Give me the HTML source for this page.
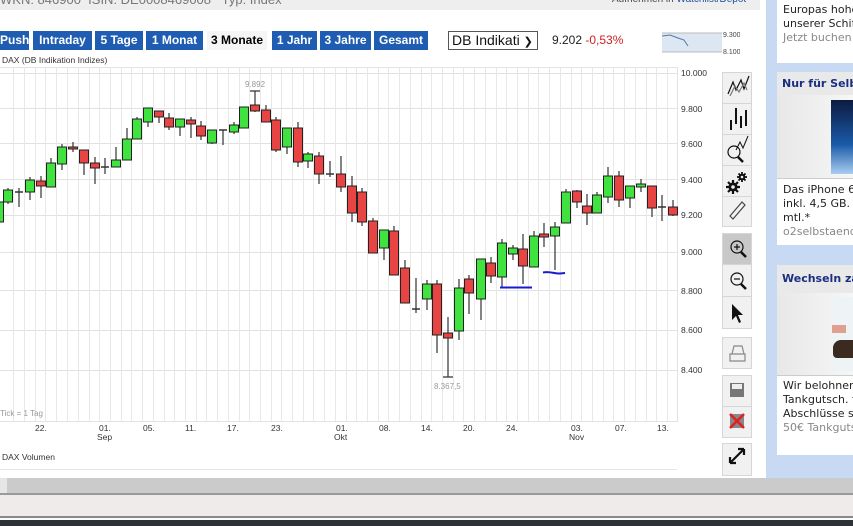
<!DOCTYPE html>
<html><head><meta charset="utf-8"><style>
*{margin:0;padding:0;box-sizing:border-box}
body{width:853px;height:526px;overflow:hidden;background:#fff;font-family:"Liberation Sans",Arial,sans-serif;position:relative}
.a{position:absolute}
.btn{position:absolute;top:31px;height:19px;background:#1f5db3;color:#fff;font-weight:bold;font-size:12px;line-height:19px;text-align:center}
.tb{position:absolute;left:722px;width:30px;background:#f1f1f1;border:1px solid #d6d6d6}
.side{font-family:"DejaVu Sans",sans-serif;font-size:11px;color:#222;line-height:14px}
</style></head><body>
<div class="a" style="left:0;top:0;width:760px;height:10px;background:#eeeeee"></div>
<div class="a" style="left:0;top:-8px;font-size:13px;color:#777;white-space:nowrap">WKN: 846900 &nbsp;ISIN: DE0008469008 &nbsp; Typ: Index</div>
<div class="a" style="left:612px;top:-6px;font-size:10px;color:#444;white-space:nowrap">Aufnehmen in <span style="color:#1f4f9f">Watchlist/Depot</span></div>

<div class="btn" style="left:0;width:29px">Push</div>
<div class="btn" style="left:33px;width:59px">Intraday</div>
<div class="btn" style="left:95px;width:48px">5 Tage</div>
<div class="btn" style="left:146px;width:57px">1 Monat</div>
<div class="btn" style="left:207px;width:60px;background:#f5f5f5;color:#000">3 Monate</div>
<div class="btn" style="left:272px;width:45px">1 Jahr</div>
<div class="btn" style="left:320px;width:51px">3 Jahre</div>
<div class="btn" style="left:374px;width:54px">Gesamt</div>
<div class="a" style="left:2px;top:55px;font-size:8.5px;color:#333">DAX (DB Indikation Indizes)</div>

<div class="a" style="left:448px;top:31px;width:90px;height:19px;border:1px solid #555;font-size:14px;line-height:17px;padding-left:3px;color:#111">DB Indikati <span style="font-size:11px">&#10095;</span></div>
<div class="a" style="left:552px;top:33px;font-size:12px;color:#222">9.202 <span style="color:#d02020">-0,53%</span></div>
<svg class="a" style="left:660px;top:30px" width="80" height="26">
<rect x="2" y="3" width="60" height="19" fill="#dde6f3"/>
<line x1="2" y1="3" x2="62" y2="3" stroke="#bbb"/><line x1="2" y1="22" x2="62" y2="22" stroke="#bbb"/>
<polyline points="2,6 10,5 18,8 24,10 28,16" fill="none" stroke="#5577aa"/>
<text x="63" y="7" font-size="7" fill="#444">9.300</text><text x="63" y="24" font-size="7" fill="#444">8.100</text>
</svg>

<svg class="a" style="left:0;top:60px" width="720" height="420">
<g transform="translate(0,-60)">
<g stroke="#e2e2e2" stroke-width="1">
<line x1="0" y1="67.5" x2="677" y2="67.5"/>
<line x1="0" y1="73.5" x2="677" y2="73.5"/><line x1="0" y1="108.5" x2="677" y2="108.5"/><line x1="0" y1="143.5" x2="677" y2="143.5"/><line x1="0" y1="179.5" x2="677" y2="179.5"/><line x1="0" y1="215.5" x2="677" y2="215.5"/><line x1="0" y1="252.5" x2="677" y2="252.5"/><line x1="0" y1="290.5" x2="677" y2="290.5"/><line x1="0" y1="330.5" x2="677" y2="330.5"/><line x1="0" y1="370.5" x2="677" y2="370.5"/>
<line x1="0" y1="421.5" x2="677" y2="421.5"/>
<line x1="677.5" y1="67" x2="677.5" y2="422"/>
</g>
<g stroke="#e8e8e8">
<path d="M13.5 67V421M24.5 67V421M35.5 67V421M45.5 67V421M56.5 67V421M67.5 67V421M78.5 67V421M89.5 67V421M99.5 67V421M110.5 67V421M121.5 67V421M131.5 67V421M142.5 67V421M153.5 67V421M164.5 67V421M174.5 67V421M185.5 67V421M196.5 67V421M206.5 67V421M217.5 67V421M228.5 67V421M239.5 67V421M249.5 67V421M260.5 67V421M271.5 67V421M281.5 67V421M292.5 67V421M303.5 67V421M313.5 67V421M324.5 67V421M335.5 67V421M346.5 67V421M356.5 67V421M367.5 67V421M378.5 67V421M388.5 67V421M399.5 67V421M410.5 67V421M421.5 67V421M431.5 67V421M442.5 67V421M453.5 67V421M463.5 67V421M474.5 67V421M485.5 67V421M496.5 67V421M506.5 67V421M517.5 67V421M528.5 67V421M538.5 67V421M549.5 67V421M560.5 67V421M571.5 67V421M581.5 67V421M592.5 67V421M603.5 67V421M613.5 67V421M624.5 67V421M635.5 67V421M646.5 67V421M656.5 67V421M667.5 67V421"/>
</g>
<g stroke="#333" stroke-width="1.2">
<path d="M-1 198V225M8 188V204M19 188V207M30 177V200M41 176V198M51 158V187M62 144V170M73 142V152M84 150V175M95 157V184M105 158V174M116 147V167M127 128V160M137 117V139M148 108V127M159 111V123M169 113V130M180 119V136M191 117V138M201 121V140M212 130V144M223 130V145M234 122V134M244 107V128M255 91V112M266 105V122M276 117V152M287 128V154M298 122V167M308 152V168M319 152V184M330 161V177M341 156V192M352 176V222M362 188V226M373 218V253M384 230V260M394 226V275M405 260V303M416 278V313M427 280V310M437 280V353M448 317V377M459 279V340M469 275V314M481 259V320M491 257V283M502 239V287M513 245V260M523 234V284M534 231V267M544 223V247M555 222V270M566 189V223M577 190V208M587 194V225M597 192V213M608 167V203M619 171V207M630 186V208M641 179V192M652 186V217M662 195V221M673 200V216"/>
<path d="M250 91H260M443 377H453"/>
<path d="M15 192H23M101 167H109M219 130H227M326 174H334M412 309H420M658 207H666" stroke-width="1.5"/>
</g>
<g fill="#3fe23f" stroke="#222" stroke-width="1">
<rect x="-5.5" y="202" width="9" height="20"/><rect x="3.5" y="190" width="9" height="12"/><rect x="25.5" y="180" width="9" height="12"/><rect x="46.5" y="163" width="9" height="24"/><rect x="57.5" y="147" width="9" height="17"/><rect x="111.5" y="160" width="9" height="7"/><rect x="122.5" y="139" width="9" height="21"/><rect x="132.5" y="119" width="9" height="20"/><rect x="143.5" y="108" width="9" height="14"/><rect x="175.5" y="119" width="9" height="8"/><rect x="207.5" y="130" width="9" height="13"/><rect x="229.5" y="125" width="9" height="7"/><rect x="239.5" y="107" width="9" height="21"/><rect x="282.5" y="128" width="9" height="19"/><rect x="303.5" y="154" width="9" height="7"/><rect x="379.5" y="230" width="9" height="18"/><rect x="422.5" y="284" width="9" height="15"/><rect x="454.5" y="288" width="9" height="43"/><rect x="476.5" y="259" width="9" height="40"/><rect x="497.5" y="243" width="9" height="34"/><rect x="508.5" y="248" width="9" height="6"/><rect x="529.5" y="236" width="9" height="31"/><rect x="550.5" y="227" width="9" height="9"/><rect x="561.5" y="192" width="9" height="31"/><rect x="592.5" y="195" width="9" height="18"/><rect x="603.5" y="176" width="9" height="21"/><rect x="625.5" y="186" width="9" height="12"/><rect x="636.5" y="184" width="9" height="3"/>
</g>
<g fill="#e84444" stroke="#222" stroke-width="1">
<rect x="36.5" y="181" width="9" height="5"/><rect x="68.5" y="147" width="9" height="2"/><rect x="79.5" y="150" width="9" height="13"/><rect x="90.5" y="163" width="9" height="5"/><rect x="154.5" y="111" width="9" height="6"/><rect x="164.5" y="118" width="9" height="9"/><rect x="186.5" y="120" width="9" height="4"/><rect x="196.5" y="126" width="9" height="10"/><rect x="250.5" y="105" width="9" height="6"/><rect x="261.5" y="110" width="9" height="12"/><rect x="271.5" y="120" width="9" height="30"/><rect x="293.5" y="128" width="9" height="34"/><rect x="314.5" y="156" width="9" height="18"/><rect x="336.5" y="174" width="9" height="13"/><rect x="347.5" y="186" width="9" height="27"/><rect x="357.5" y="192" width="9" height="30"/><rect x="368.5" y="221" width="9" height="32"/><rect x="389.5" y="231" width="9" height="44"/><rect x="400.5" y="268" width="9" height="35"/><rect x="432.5" y="284" width="9" height="51"/><rect x="443.5" y="333" width="9" height="5"/><rect x="464.5" y="279" width="9" height="14"/><rect x="486.5" y="263" width="9" height="13"/><rect x="518.5" y="249" width="9" height="17"/><rect x="539.5" y="234" width="9" height="3"/><rect x="572.5" y="191" width="9" height="11"/><rect x="582.5" y="206" width="9" height="7"/><rect x="614.5" y="176" width="9" height="24"/><rect x="647.5" y="186" width="9" height="22"/><rect x="668.5" y="207" width="9" height="8"/>
</g>
<path d="M500 287.5H532" stroke="#1a1ad0" stroke-width="2"/>
<path d="M543 272.5C550 271 555 274 560 273.5L565 273" stroke="#1a1ad0" stroke-width="2" fill="none"/>
<g font-size="8" fill="#999"><text x="245" y="87">9.892</text><text x="434" y="389">8.367,5</text><text x="0" y="416">Tick = 1 Tag</text></g>
<g font-size="8.5" fill="#333">
<text x="681" y="76">10.000</text><text x="681" y="112">9.800</text><text x="681" y="147">9.600</text><text x="681" y="183">9.400</text><text x="681" y="218">9.200</text><text x="681" y="255">9.000</text><text x="681" y="294">8.800</text><text x="681" y="333">8.600</text><text x="681" y="373">8.400</text>
</g>
<g font-size="8.5" fill="#333">
<text x="35" y="431">22.</text><text x="99" y="431">01.</text><text x="97" y="440">Sep</text><text x="143" y="431">05.</text><text x="185" y="431">11.</text><text x="227" y="431">17.</text><text x="271" y="431">23.</text><text x="336" y="431">01.</text><text x="334" y="440">Okt</text><text x="379" y="431">08.</text><text x="421" y="431">14.</text><text x="463" y="431">20.</text><text x="506" y="431">24.</text><text x="571" y="431">03.</text><text x="569" y="440">Nov</text><text x="615" y="431">07.</text><text x="657" y="431">13.</text>
</g>
<text x="2" y="460" font-size="8.5" fill="#333">DAX Volumen</text>
<line x1="0" y1="469.5" x2="677" y2="469.5" stroke="#e6e6e6"/>
</g></svg>

<!-- toolbar -->
<div class="tb" style="top:72px;height:155px"></div>
<div class="a" style="left:722px;top:103px;width:30px;border-top:1px solid #d6d6d6"></div>
<div class="a" style="left:722px;top:134px;width:30px;border-top:1px solid #d6d6d6"></div>
<div class="a" style="left:722px;top:165px;width:30px;border-top:1px solid #d6d6d6"></div>
<div class="a" style="left:722px;top:196px;width:30px;border-top:1px solid #d6d6d6"></div>
<div class="tb" style="top:233px;height:96px"></div>
<div class="a" style="left:723px;top:234px;width:28px;height:30px;background:#c8c8c8"></div>
<div class="a" style="left:722px;top:264px;width:30px;border-top:1px solid #d6d6d6"></div>
<div class="a" style="left:722px;top:296px;width:30px;border-top:1px solid #d6d6d6"></div>
<div class="tb" style="top:337px;height:32px"></div>
<div class="tb" style="top:375px;height:63px"></div>
<div class="a" style="left:722px;top:406px;width:30px;border-top:1px solid #d6d6d6"></div>
<div class="tb" style="top:443px;height:33px"></div>
<svg class="a" style="left:722px;top:72px" width="30" height="410" fill="none" stroke="#111" stroke-width="1.2">
<path d="M6 22L11 10L14 18L19 8L22 17L27 4"/><path d="M8 24L13 14L17 20L22 11L25 18" stroke="#777"/>
<path d="M9 58V48M14 52V36M19 56V44M24 54V38" stroke-width="2"/>
<circle cx="12" cy="80" r="6"/><path d="M16 85L21 90" stroke-width="2.5"/><path d="M14 78L18 70L21 76L26 64" stroke-width="1"/>
<g stroke="#111" stroke-width="2.2"><path d="M11 108V122M4 115H18M6 110L16 120M16 110L6 120"/><path d="M20 100V110M15 105H25M16.5 101.5L23.5 108.5M23.5 101.5L16.5 108.5" stroke-width="1.8"/></g>
<g fill="#111" stroke="none"><circle cx="11" cy="115" r="4.5"/><circle cx="20" cy="105" r="3.3"/></g>
<g fill="#f1f1f1" stroke="none"><circle cx="11" cy="115" r="1.8"/><circle cx="20" cy="105" r="1.3"/></g>
<path d="M8 144L20 130L23 133L11 147Z" stroke="#444"/>
<circle cx="15" cy="175" r="6"/><path d="M19 180L24 185" stroke-width="2.5"/><path d="M12 175H18M15 172V178"/>
<circle cx="15" cy="207" r="6"/><path d="M19 212L24 217" stroke-width="2.5"/><path d="M12 207H18"/>
<path d="M10 232L10 248L14 244L17 251L19 250L16 243L21 243Z" fill="#111" stroke="none"/>
<path d="M8 282H23V289H8Z M10 282L12 274H20L22 282" stroke="#888"/>
<rect x="8" y="311" width="14" height="14" fill="#777" stroke="none"/><rect x="10" y="312" width="10" height="5" fill="#eee" stroke="none"/>
<rect x="8" y="342" width="14" height="14" fill="#888" stroke="none"/><path d="M8 342L22 356M22 342L8 356" stroke="#e02020" stroke-width="2.5"/>
<path d="M8 391L22 377M8 391V385M8 391H14M22 377V383M22 377H16" stroke-width="2.2"/>
</svg>

<!-- sidebar -->
<div class="a" style="left:766px;top:0;width:87px;height:478px;background:#c7d9f3"></div>
<div class="a" style="left:777px;top:0;width:76px;height:63px;background:#fff"></div>
<div class="a side" style="left:783px;top:3px;white-space:nowrap">Europas hoher<br>unserer Schiffe<br><span style="color:#888">Jetzt buchen!</span></div>
<div class="a" style="left:777px;top:72px;width:76px;height:173px;background:#fff"></div>
<div class="a" style="left:777px;top:72px;width:76px;height:23px;background:#e9e9e9;font:bold 11px 'DejaVu Sans',sans-serif;color:#1a2f80;line-height:23px;padding-left:5px;white-space:nowrap">Nur für Selbs</div>
<div class="a" style="left:777px;top:95px;width:76px;height:83px;background:linear-gradient(90deg,#e8e8e8,#f6f6f6)"></div>
<div class="a" style="left:831px;top:100px;width:22px;height:74px;background:linear-gradient(#0d1a40,#1a5aa8 60%,#a9cdf0)"></div>
<div class="a" style="left:777px;top:178px;width:76px;border-top:1px solid #ccc"></div>
<div class="a side" style="left:783px;top:183px;white-space:nowrap">Das iPhone 6 m<br>inkl. 4,5 GB. Fu<br>mtl.*<br><span style="color:#888">o2selbstaendig</span></div>
<div class="a" style="left:777px;top:265px;width:76px;height:190px;background:#fff"></div>
<div class="a" style="left:777px;top:265px;width:76px;height:28px;background:#e9e9e9;font:bold 11px 'DejaVu Sans',sans-serif;color:#1a2f80;line-height:28px;padding-left:5px;white-space:nowrap">Wechseln zal</div>
<div class="a" style="left:777px;top:293px;width:76px;height:82px;background:linear-gradient(90deg,#e8e8e8,#f6f6f6)"></div>
<div class="a" style="left:831px;top:297px;width:22px;height:74px;background:#eef3f6"></div>
<div class="a" style="left:832px;top:325px;width:14px;height:8px;background:#e0a090"></div>
<div class="a" style="left:833px;top:340px;width:20px;height:18px;background:#3a2a20;border-radius:8px 0 0 4px"></div>
<div class="a" style="left:777px;top:375px;width:76px;border-top:1px solid #ccc"></div>
<div class="a side" style="left:783px;top:379px;white-space:nowrap">Wir belohnen V<br>Tankgutsch. fü<br>Abschlüsse sic<br><span style="color:#888">50€ Tankgutsc</span></div>

<!-- bottom -->
<div class="a" style="left:0;top:478px;width:853px;height:15px;background:#cbcbcb"></div>
<div class="a" style="left:0;top:478px;width:7px;height:15px;background:#e6e6e6"></div>
<div class="a" style="left:0;top:493px;width:853px;height:2px;background:#9a9a9a"></div>
<div class="a" style="left:0;top:495px;width:853px;height:21px;background:#efebea"></div>
<div class="a" style="left:0;top:516px;width:853px;height:2px;background:#888"></div>
<div class="a" style="left:0;top:518px;width:853px;height:2px;background:#f8fcfc"></div>
<div class="a" style="left:0;top:520px;width:853px;height:6px;background:#2e3236"></div>
</body></html>
